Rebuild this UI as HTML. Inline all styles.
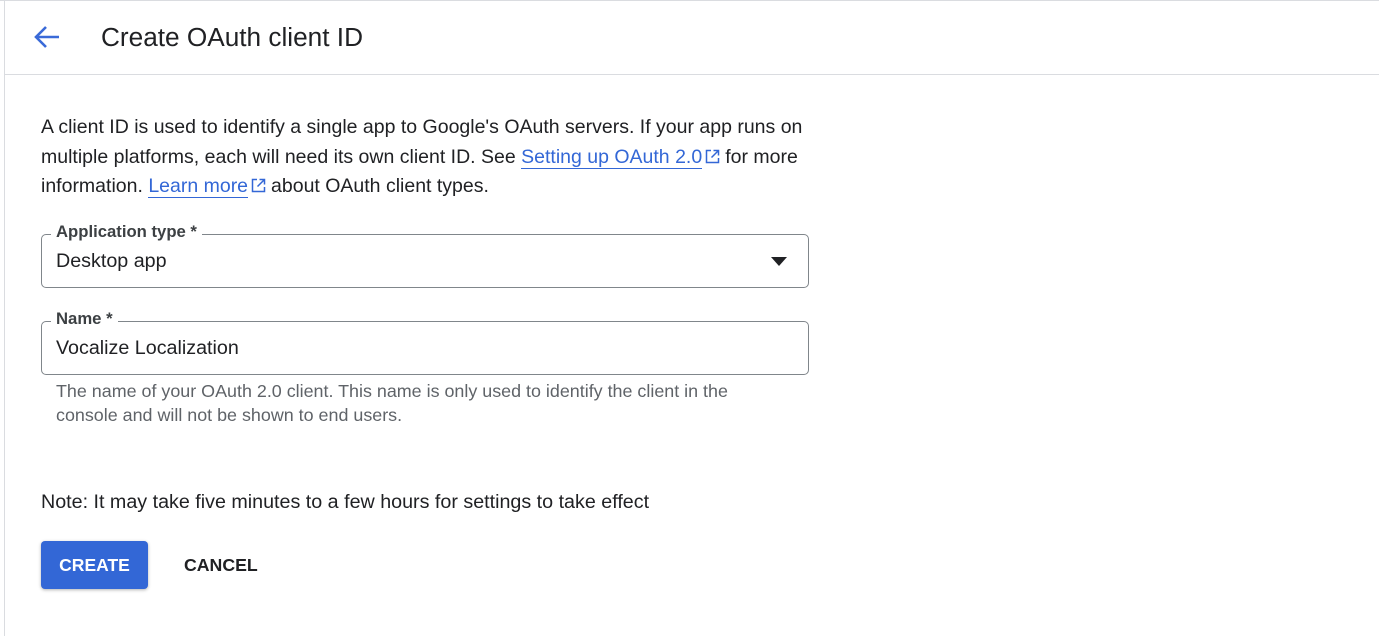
<!DOCTYPE html>
<html><head><meta charset="utf-8"><style>
*{margin:0;padding:0;box-sizing:border-box}
body{width:1379px;height:636px;background:#fff;font-family:"Liberation Sans",Arial,sans-serif;color:#202124;position:relative;overflow:hidden}
.a{position:absolute;white-space:nowrap}
.p{font-size:19.5px;left:41px}
a{color:#3367d6;text-decoration:none;border-bottom:1px solid #3367d6}
.ext{display:inline-block;vertical-align:-1px;margin:0 5px 0 3px}
.box{position:absolute;left:41px;width:768px;height:54px;border:1px solid #80868b;border-radius:5px}
.lab{position:absolute;top:-13px;left:9px;background:#fff;padding:0 5px;font-size:16.7px;font-weight:bold;color:#3c4043}
.val{position:absolute;left:14px;top:15px;font-size:19.7px}
</style></head><body>
<div class="a" style="left:0;top:0;width:1379px;height:1px;background:#dadce0"></div>
<div class="a" style="left:4px;top:0;width:1px;height:636px;background:#dadce0"></div>
<div class="a" style="left:4px;top:74px;width:1375px;height:1px;background:#dadce0"></div>
<svg class="a" style="left:33px;top:25px" width="28" height="24" viewBox="0 0 28 24"><path d="M3 12H26M13 2L3 12L13 22" fill="none" stroke="#3a6ad8" stroke-width="2.6"/></svg>
<div class="a" style="left:101px;top:22px;font-size:26.2px;color:#202124">Create OAuth client ID</div>
<div class="a p" style="top:116px">A client ID is used to identify a single app to Google's OAuth servers. If your app runs on</div>
<div class="a p" style="top:146px">multiple platforms, each will need its own client ID. See <a>Setting up OAuth 2.0</a><svg class="ext" width="15" height="15" viewBox="0 0 15 15"><path d="M6 1.5H1.5V13.5H13.5V9M8.5 1.5H13.5V6.5M13.5 1.5L6.5 8.5" fill="none" stroke="#3367d6" stroke-width="1.5"/></svg>for more</div>
<div class="a p" style="top:175px">information. <a>Learn more</a><svg class="ext" width="15" height="15" viewBox="0 0 15 15"><path d="M6 1.5H1.5V13.5H13.5V9M8.5 1.5H13.5V6.5M13.5 1.5L6.5 8.5" fill="none" stroke="#3367d6" stroke-width="1.5"/></svg>about OAuth client types.</div>
<div class="box" style="top:234px"><div class="lab">Application type *</div><div class="val">Desktop app</div>
<svg class="a" style="left:729px;top:22px" width="16" height="9"><path d="M0 0H16L8 9Z" fill="#202124"/></svg></div>
<div class="box" style="top:321px"><div class="lab">Name *</div><div class="val">Vocalize Localization</div></div>
<div class="a" style="left:56px;top:379px;font-size:17.9px;color:#5f6368;line-height:24px">The name of your OAuth 2.0 client. This name is only used to identify the client in the<br>console and will not be shown to end users.</div>
<div class="a" style="left:41px;top:491px;font-size:19.7px">Note: It may take five minutes to a few hours for settings to take effect</div>
<div class="a" style="left:41px;top:541px;width:107px;height:48px;background:#3367d6;border-radius:4px;box-shadow:0 1px 3px rgba(0,0,0,.3);color:#fff;font-weight:bold;font-size:17.5px;text-align:center;line-height:48px">CREATE</div>
<div class="a" style="left:184px;top:555px;font-weight:bold;font-size:17.7px;color:#202124">CANCEL</div>
</body></html>
